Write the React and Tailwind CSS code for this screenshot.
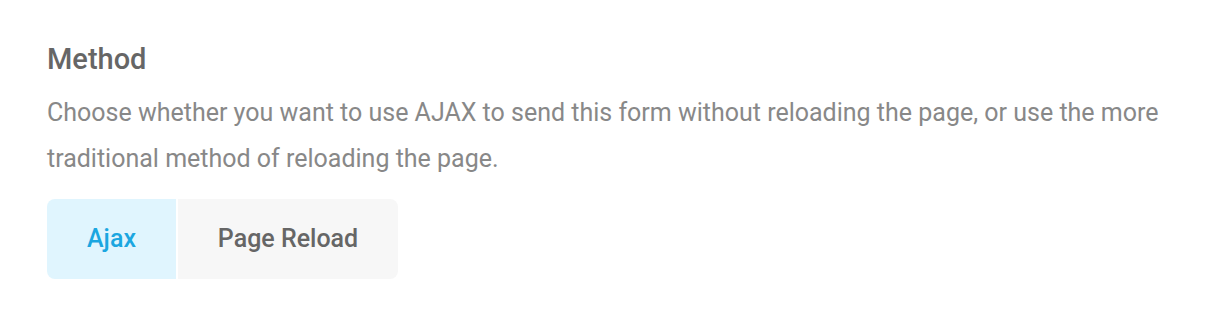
export default function App() {
  return (
    <div className="w-[1220px] h-[330px] bg-white px-[47px] pt-[41px]" style={{ fontFamily: "Roboto, sans-serif" }}>
      <h2 className="text-[29px] leading-[36px] font-medium text-[#666666]">Method</h2>
      <p className="mt-[13px] text-[25px] leading-[46px] text-[#888888] w-[1126px]">
        Choose whether you want to use AJAX to send this form without reloading the page, or use the more traditional method of reloading the page.
      </p>
      <div className="mt-[17px] flex gap-[2px]">
        <button className="w-[129px] h-[80px] rounded-l-[8px] bg-[#e0f5fe] text-[#1ba6e0] text-[25px] font-medium">Ajax</button>
        <button className="w-[220px] h-[80px] rounded-r-[8px] bg-[#f7f7f7] text-[#666666] text-[25px] font-medium">Page Reload</button>
      </div>
    </div>
  );
}
